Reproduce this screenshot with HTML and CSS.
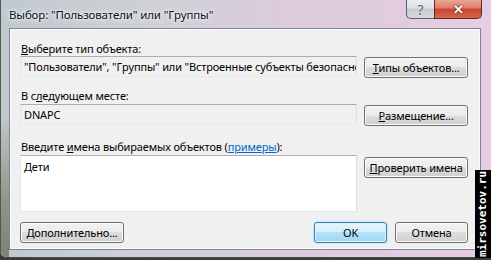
FILE: index.html
```html
<!DOCTYPE html>
<html lang="ru">
<head>
  <meta charset="UTF-8" />
  <title>Выбор: "Пользователи" или "Группы"</title>
  <link rel="stylesheet" href="styles.css">
</head>
<body>
  <div class="window">
    <div class="titlebar">
      <span class="title">Выбор: "Пользователи" или "Группы"</span>
      <div class="caption-btns">
        <span class="cap-help">?</span>
        <span class="cap-close">✕</span>
      </div>
    </div>
    <div class="client">
      <div class="label"><u>В</u>ыберите тип объекта:</div>
      <div class="row">
        <div class="field">"Пользователи", "Группы" или "Встроенные субъекты безопасности"</div>
        <button class="btn"><u>Т</u>ипы объектов...</button>
      </div>
      <div class="label label-next">В с<u>л</u>едующем месте:</div>
      <div class="row row-tight">
        <div class="field">DNAPC</div>
        <button class="btn"><u>Р</u>азмещение...</button>
      </div>
      <div class="label label-names">Введите <u>и</u>мена выбираемых объектов (<a href="#" class="link">примеры</a>):</div>
      <div class="row row-tight">
        <div class="field field-names">Дети</div>
        <button class="btn btn-check"><u>П</u>роверить имена</button>
      </div>
      <div class="footer">
        <button class="btn"><u>Д</u>ополнительно...</button>
        <div class="footer-right">
          <button class="btn btn-ok">OK</button>
          <button class="btn btn-cancel">Отмена</button>
        </div>
      </div>
    </div>
    <div class="watermark">mirsovetov.ru</div>
  </div>
</body>
</html>
```

FILE: styles.css
```css
* {
  margin: 0;
  padding: 0;
  box-sizing: border-box;
}
body {
  background: #3b3b3b;
  font-family: 'Noto Sans', sans-serif;
  font-size: 11px;
  letter-spacing: -0.15px;
  font-kerning: none;
  color: #000;
  overflow: hidden;
}
.window {
  position: relative;
  width: 491px;
  height: 258px;
  padding: 0 10px 0 8px;
  background: linear-gradient(90deg, #bfc9cf 0%, #cfd0d8 30%, #dccbdc 60%, #e6cde3 100%);
  border-left: 1px solid #55584f;
  border-bottom: 1px solid #4a4a4a;
  border-bottom-left-radius: 6px;
}
.window::before {
  content: "";
  position: absolute;
  left: 0;
  top: 120px;
  width: 8px;
  bottom: 0;
  background: linear-gradient(#c0c6c8, #8f9586 60%, #7d8476);
  border-bottom-left-radius: 6px;
}
.titlebar {
  height: 28px;
  display: flex;
  justify-content: space-between;
  align-items: flex-start;
}
.title {
  margin-top: 7px;
  font-size: 11.5px;
  color: #111;
  text-shadow: 0 0 6px #fff, 0 0 3px #fff;
}
.caption-btns {
  display: flex;
  margin-right: -1px;
}
.cap-help, .cap-close {
  height: 19px;
  display: flex;
  align-items: center;
  justify-content: center;
  border: 1px solid #5b5e66;
  border-top: none;
  letter-spacing: 0;
}
.cap-help {
  width: 28px;
  border-right: none;
  border-bottom-left-radius: 5px;
  background: linear-gradient(#eceef0, #dde0e4 45%, #c6cbd1 50%, #d6dade);
  color: #5d636b;
  font-size: 14px;
  text-shadow: 0 0 2px #fff;
}
.cap-close {
  width: 48px;
  border-color: #5e2b22;
  border-bottom-right-radius: 5px;
  background: linear-gradient(#e9a694, #de7c66 45%, #c6452c 50%, #d5674c);
  color: #fff;
  font-size: 13px;
  font-weight: 700;
  text-shadow: 0 0 2px #5c1a10, 0 0 1px #5c1a10;
}
.client {
  height: 222px;
  background: #f0f0f0;
  border: 1px solid #7b8796;
  box-shadow: inset 0 0 0 1px #fbfbfb;
  padding: 12px 12px 0 10px;
  display: flex;
  flex-direction: column;
}
.label {
  height: 15px;
  line-height: 15px;
  padding-left: 1px;
  white-space: nowrap;
}
.label-next {
  margin-top: 10px;
}
.label-names {
  margin-top: 13px;
}
.link {
  color: #0066cc;
}
.row {
  display: flex;
  align-items: flex-start;
  gap: 7px;
}
.row-tight {
  margin-top: 1px;
}
.field {
  width: 338px;
  height: 21px;
  line-height: 19px;
  padding: 0 3px;
  border: 1px solid;
  border-color: #abadb3 #dbdfe6 #e3e9ef #e2e3ea;
  background: #f0f0f0;
  white-space: nowrap;
  overflow: hidden;
}
.field-names {
  height: 57px;
  padding-top: 3px;
  line-height: 15px;
  background: #fff;
}
.btn {
  height: 21px;
  width: 104px;
  margin-top: 1px;
  border: 1px solid #707070;
  border-radius: 3px;
  background: linear-gradient(#f2f2f2 0%, #ebebeb 50%, #dddddd 50%, #cfcfcf 100%);
  box-shadow: inset 0 0 0 1px #fbfbfb;
  font-family: 'Noto Sans', sans-serif;
  font-size: 11px;
  letter-spacing: -0.15px;
  font-kerning: none;
  color: #000;
}
.btn-check {
  margin-top: 2px;
}
.footer {
  margin-top: 9px;
  display: flex;
  justify-content: space-between;
}
.footer-right {
  display: flex;
  gap: 8px;
}
.btn-ok, .btn-cancel {
  width: 73px;
}
.btn-ok {
  border-color: #3c7fb1;
  background: linear-gradient(#e6f5fd 0%, #d3eefc 50%, #b5e2fa 50%, #9fd6f3 100%);
  box-shadow: inset 0 0 0 1px #d8f2fe, 0 0 2px #7fd0f5;
}
.watermark {
  position: absolute;
  right: 0;
  bottom: -1px;
  width: 16px;
  height: 88px;
  background: #000;
  color: #fff;
  font-family: 'DejaVu Sans Mono', monospace;
  font-size: 11px;
  font-weight: 700;
  letter-spacing: 0;
  writing-mode: vertical-rl;
  transform: rotate(180deg);
  text-align: center;
  line-height: 16px;
}
```
